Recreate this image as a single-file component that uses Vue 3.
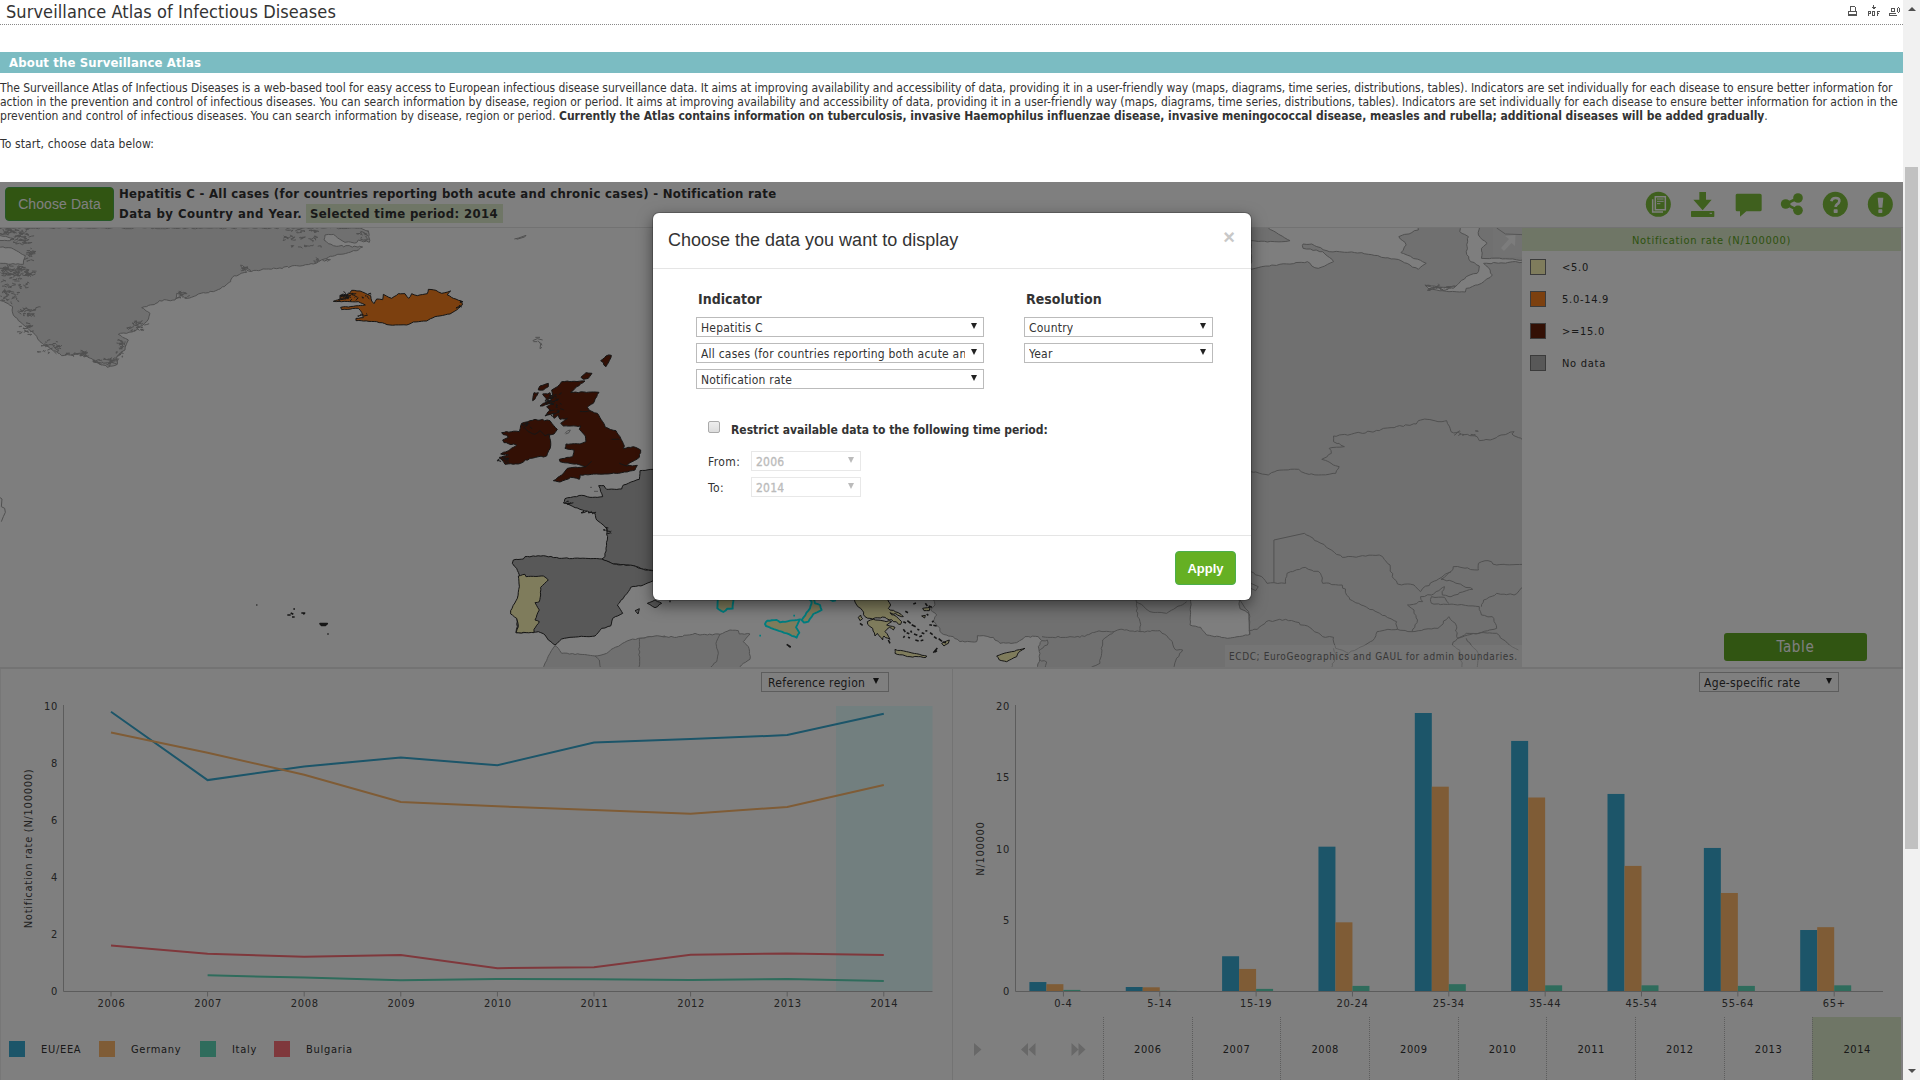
<script setup>
const years = [2006, 2007, 2008, 2009, 2010, 2011, 2012, 2013, 2014]

const trends = [
  { name: 'EU/EEA', color: '#38aad2', start: 0, values: [9.8, 7.4, 7.88, 8.19, 7.92, 8.72, 8.84, 8.98, 9.73] },
  { name: 'Germany', color: '#feb86c', start: 0, values: [9.07, 8.36, 7.59, 6.63, 6.48, 6.35, 6.22, 6.46, 7.23] },
  { name: 'Italy', color: '#5ed8b8', start: 1, values: [0.55, 0.47, 0.38, 0.42, 0.41, 0.39, 0.42, 0.35] },
  { name: 'Bulgaria', color: '#ff7078', start: 0, values: [1.6, 1.31, 1.2, 1.26, 0.8, 0.83, 1.27, 1.32, 1.26] }
]
const yearX = (i) => 111 + i * 96.6
const rateY = (v) => 991 - v * 28.5
const trendPoints = (t) => t.values.map((v, i) => `${yearX(i + t.start)},${rateY(v).toFixed(1)}`).join(' ')

const ages = [
  { label: '0-4', rates: [0.65, 0.5, 0.1] },
  { label: '5-14', rates: [0.3, 0.28, 0.03] },
  { label: '15-19', rates: [2.46, 1.57, 0.17] },
  { label: '20-24', rates: [10.15, 4.84, 0.38] },
  { label: '25-34', rates: [19.53, 14.36, 0.5] },
  { label: '35-44', rates: [17.57, 13.6, 0.42] },
  { label: '45-54', rates: [13.85, 8.8, 0.42] },
  { label: '55-64', rates: [10.06, 6.9, 0.38] },
  { label: '65+', rates: [4.3, 4.5, 0.42] }
]
const ageX = (i) => 1063.4 + i * 96.35

const classes = [
  { label: '<5.0', color: '#fff8b8' },
  { label: '5.0-14.9', color: '#f8801e' },
  { label: '>=15.0', color: '#66200a' },
  { label: 'No data', color: '#b0b0b0' }
]

/* Deterministic noise keeps the coastlines identical on every load. */
let seed = 7
const rand = () => {
  seed = (seed * 16807) % 2147483647
  return seed / 2147483647 - 0.5
}

/* Splits every segment and nudges the new vertices, giving a ragged coast. */
function coast(text, amp = 5, closed = true) {
  const pts = text.trim().split(' ').map((p) => p.split(',').map(Number))
  const out = []
  const n = closed ? pts.length : pts.length - 1
  for (let i = 0; i < n; i++) {
    const [x1, y1] = pts[i]
    const [x2, y2] = pts[(i + 1) % pts.length]
    const steps = Math.max(1, Math.round(Math.hypot(x2 - x1, y2 - y1) / 8))
    out.push([x1, y1])
    for (let s = 1; s < steps; s++) {
      out.push([x1 + ((x2 - x1) * s) / steps + rand() * amp, y1 + ((y2 - y1) * s) / steps + rand() * amp])
    }
  }
  if (!closed) out.push(pts[pts.length - 1])
  return 'M' + out.map((p) => p.map((v) => v.toFixed(1)).join(',')).join('L') + (closed ? 'Z' : '')
}

/* Clusters of short fjord strokes inside x, y, width, height boxes. */
function fjords(boxes, density = 1) {
  let d = ''
  for (const [x, y, w, h, n] of boxes) {
    for (let i = 0; i < n * density; i++) {
      const px = x + (rand() + 0.5) * w
      const py = y + (rand() + 0.5) * h
      d += `M${px.toFixed(1)},${py.toFixed(1)}l${(rand() * 26).toFixed(1)},${(rand() * 9).toFixed(1)}l${(rand() * 16).toFixed(1)},${(rand() * 10).toFixed(1)}`
    }
  }
  return d
}

const greenland = coast('-6,9 1080,9 1105,18 1108,52 1075,45 1070,53 1035,52 1018,42 1000,28 975,30 972,45 985,56 1000,62 1088,66 1075,75 1020,88 985,97 940,117 890,122 830,131 745,138 722,120 740,142 697,157 692,170 660,192 640,200 610,203 560,220 530,205 525,225 478,227 468,235 425,248 450,265 440,290 410,315 380,325 355,328 385,345 375,375 350,395 352,418 322,427 282,408 250,385 185,392 120,350 105,328 60,290 40,270 38,245 -6,222', 5)
const inlets = coast('-6,64 40,72 76,92 70,118 -6,115', 4) + coast('-6,30 38,40 30,47 -6,46', 3)
const iceInlets = fjords([
  [8, 14, 74, 16, 16], [40, 30, 46, 26, 16], [80, 72, 20, 34, 10], [4, 122, 74, 30, 34], [70, 130, 30, 24, 8], [4, 160, 84, 30, 12], [4, 196, 50, 34, 14], [62, 248, 46, 26, 14],
  [64, 290, 40, 40, 8], [116, 342, 60, 40, 12], [236, 380, 36, 14, 10], [280, 402, 64, 16, 16], [352, 345, 22, 60, 12], [390, 290, 44, 26, 12],
  [525, 204, 40, 16, 8], [870, 14, 90, 8, 8], [850, 34, 100, 10, 10], [870, 62, 100, 4, 5], [1080, 14, 22, 34, 8], [722, 124, 20, 12, 4],
  [940, 100, 50, 10, 4], [190, 384, 40, 6, 4]
], 1.9)
const iceland = coast('1000,229 1020,222 1020,212 1045,208 1055,196 1080,198 1112,212 1115,228 1122,236 1130,222 1148,224 1150,208 1175,220 1195,206 1215,206 1226,220 1235,206 1252,212 1282,206 1285,193 1308,196 1325,205 1352,198 1342,210 1360,220 1385,228 1387,240 1370,255 1350,267 1305,275 1280,288 1240,291 1220,300 1170,300 1130,290 1068,287 1068,280 1090,278 1085,262 1075,250 1025,254 1022,247 1060,244 1096,240 1075,230', 2)
const icelandFjords = fjords([[1020, 206, 40, 18, 24], [1062, 205, 46, 14, 6], [1374, 232, 10, 18, 6], [1085, 262, 18, 12, 4]])

const britain = coast('245,125 315,123 285,145 272,157 357,157 340,190 322,202 330,212 352,220 368,245 376,262 408,272 420,290 433,318 430,326 460,320 482,330 478,352 450,368 440,378 472,376 465,390 425,398 375,402 350,402 300,405 298,418 272,412 240,426 220,422 245,405 262,385 318,380 290,372 240,365 238,358 278,350 282,330 255,325 258,312 300,312 318,305 316,288 298,268 302,258 250,258 242,250 262,235 240,238 235,225 222,235 220,220 195,228 210,210 200,200 218,190 180,198 190,190 212,182 218,165 215,150 232,140', 3)
const isles = ['362,62 378,48 394,46 388,62 378,80 370,68', '303,112 318,98 336,100 325,115 310,118', '175,150 180,138 205,130 205,140 190,150', '158,182 162,158 175,158 168,170', '188,162 210,158 214,175 200,180'].map((s) => coast(s, 5)).join('')
const ireland = coast('65,278 95,275 118,275 125,250 150,242 165,238 210,242 232,268 222,282 208,285 212,318 200,348 150,355 115,372 75,373 58,352 85,345 62,342 100,322 110,315 72,308 68,300 85,292', 4)
const britishInner = coast('133,262 145,275 165,283 180,272 195,288 208,282', 2, false) + coast('300,214 315,215 330,212', 2, false) + coast('318,380 335,364', 1, false) + coast('395,298 418,298', 2, false) + coast('418,370 440,378', 1, false) + fjords([[200, 165, 24, 60, 22], [62, 345, 22, 20, 10], [125, 250, 26, 14, 8], [225, 150, 20, 80, 10]])
const france = coast('560,386 520,388 480,392 478,418 430,435 425,447 380,448 372,437 356,437 368,470 330,472 305,466 255,476 253,484 262,492 300,508 345,520 350,540 380,565 382,600 375,650 366,657 400,672 460,677 490,688 520,692 560,694', 3)
const spain = coast('366,657 300,655 245,655 190,647 135,650 130,657 100,660 97,670 110,685 118,705 120,740 112,780 92,815 110,830 112,860 108,878 175,875 195,885 205,900 225,915 245,897 270,892 345,888 365,865 392,858 398,835 428,820 412,795 445,755 452,742 490,735 520,722 560,700 560,694 520,692 490,688 460,677 400,672', 3) + coast('502,790 525,780 545,790 525,803', 3) + coast('465,812 478,806 474,822', 2)
const franceShore = fjords([[256, 484, 14, 10, 6], [305, 512, 44, 10, 5], [374, 560, 10, 30, 6]])
const portugal = coast('115,708 135,703 138,710 190,708 205,720 182,742 182,765 178,785 165,788 178,810 165,840 178,845 162,868 162,878 108,878 115,860 110,835 92,822 92,812 112,775 118,740', 2)
const maghreb = coast('225,917 235,925 245,940 300,943 345,948 380,940 400,925 450,900 500,892 555,888 560,1000 180,1000 210,940', 3)
const maghrebBorder = coast('345,948 358,960 362,985', 2, false)

const tunisia = coast('-2,145 45,138 110,142 165,130 180,135 240,133 270,120 295,122 298,132 330,132 310,155 325,170 328,190 330,208 310,220 290,240 -2,240', 4)
const tunisiaBorder = coast('240,133 228,160 235,190 230,215 205,236', 3, false)
const sardinia = coast('235,10 232,55 250,66 262,56 278,56 282,10', 2)
const calabria = coast('490,10 515,35 510,55 485,90 492,98 505,95 520,72 545,60 540,45 525,40 520,10', 2)
const sicily = coast('375,102 382,92 410,90 420,97 480,88 468,112 478,128 470,143 425,125 378,108', 2)
const greece = coast('632,10 650,45 662,55 675,80 690,85 735,82 760,95 782,103 785,95 750,68 790,80 775,68 745,55 752,45 738,10', 5) + coast('682,95 700,88 755,95 740,105 765,112 760,120 748,112 735,125 750,148 732,138 728,150 712,130 705,138 698,115 683,103', 4) + coast('765,178 800,185 860,198 858,202 810,200 765,190', 3) + coast('905,160 928,150 925,160 912,168', 3) + coast('848,55 870,52 868,62 852,62', 3) + coast('845,78 856,76 854,84', 2) + coast('655,82 662,75 668,86 660,92', 4)
const cyprus = coast('1070,198 1100,188 1115,185 1155,175 1135,188 1130,200 1100,215 1078,210', 2)
const aegean = 'M790,95l8,4M802,92l10,8M815,104l12,6M832,118l6,2M790,118l6,8M800,128l8,3M812,122l3,6M822,132l10,4M845,128l8,3M838,140l8,-3M804,142l6,2M826,150l10,3M842,152l8,-2M868,104l8,2M880,106l10,2M870,128l8,6M882,140l8,6M896,146l10,8M908,156l10,2M856,122l6,1M794,138l-4,5M820,42l8,-3M796,64l8,4M860,72l5,4M880,188l12,-14M885,186l6,-4M440,163l12,8M446,168l6,4M88,34l4,0M856,40l6,8M866,48l10,4M876,96l5,-3M660,100l8,6M745,150l5,10'
const anatolia = coast('880,10 885,45 872,60 890,75 880,95 895,110 905,130 940,140 960,155 1010,155 1012,137 1060,142 1080,160 1130,158 1155,140 1195,140 1205,152 1195,170 1200,190 1198,215 1188,250 1850,250 1850,10', 5)
const levant = ['1206,140 1222,142 1290,140 1320,142 1370,125 1422,125 1440,118 1500,125 1560,122', '1422,125 1388,150 1385,190 1380,220 1352,234', '1206,152 1222,150 1222,165 1198,182', '1198,208 1220,216 1215,234', '1488,30 1492,80 1500,95 1500,125', '1560,122 1592,150 1605,178 1628,180 1608,210 1600,236', '1490,35 1530,65 1580,70 1640,35'].map((s) => coast(s, 5, false)).join('')
const caspian = coast('1653,-10 1650,75 1682,82 1700,105 1762,115 1830,103 1828,42 1800,26 1795,-10', 3)

const arctic = coast('25,62 80,65 115,62 65,24 65,10 412,10 410,30 365,50 382,75 370,98 428,130 410,148 370,122 280,98 205,95 165,72 145,72 145,85 190,95 215,125 180,145 165,138 155,125 50,140 25,148', 4)
const obGulf = coast('505,10 505,35 525,50 520,95 530,125 550,138 545,160 520,170 490,205 425,195 435,208 505,216 518,216 520,205 555,190 580,165 575,150 560,130 650,126 650,120 620,117 555,115 555,85 568,70 548,45 550,10', 4)
const asia = ['25,755 45,760 65,765 80,755 100,750 135,748 150,760 180,765 220,760 228,740 188,718 210,700 205,685 240,680 215,665 215,648 320,632 330,625 405,612 410,602 430,598 455,605 475,602 485,635 545,650 550,662 575,660 600,645 630,635 625,642 652,662',
  '148,940 235,1012 320,1005 345,1035 350,1070 362,1092 400,1095 415,1115 420,1105 485,1055 490,1040 548,1050 548,1030 570,1022 590,1035 652,1033',
  '25,1055 50,1070 62,1090 105,1090 108,1060 150,1042 185,1060 190,1090 235,1095 252,1138 360,1205 362,1228 340,1228 315,1235 305,1262 250,1300 220,1285 215,1252 190,1250 155,1218 105,1198 60,1205 40,1228 20,1232',
  '362,1228 395,1235 408,1200 400,1170 385,1155 420,1145 415,1130 440,1125 470,1100 465,1125 485,1130 535,1108 490,1085 462,1078 485,1055',
  '395,1235 455,1225 480,1190 495,1210 500,1255 590,1225 580,1190 555,1185 550,1160 500,1155 440,1150 440,1130 470,1132 480,1150',
  '555,1160 560,1140 590,1120 630,1125 652,1100', '500,1255 488,1275 505,1290 510,1345', '500,1255 520,1240 590,1240 615,1270 640,1290', '520,1255 550,1305 545,1345', '215,1285 220,1300 210,1345'
].map((s) => coast(s, 5, false)).join('') + 'M78,1088V960L148,940'
const asiaInner = fjords([[432, 198, 60, 10, 18], [490, 634, 60, 14, 6]])
</script>

<template>
  <div class="page">
    <div class="content">
      <header class="title-row">
        <h1>Surveillance Atlas of Infectious Diseases</h1>
        <svg class="tools" width="54" height="14" viewBox="0 0 54 14" shape-rendering="crispEdges" fill="none" stroke="#555" stroke-width="1">
          <path d="M2.500 6V1.500H6.500L7.500 2.500V6M.5 6.500H9M.5 9.500H9M.5 6V10M8.500 6V10" />
          <path d="M0 9.500H9" stroke-width="2" />
          <path d="M25.500 0V4M23.500 2.500H28M24.500 3.500H27M20.500 11V6.500H22.500V8.500H20.500M24.500 6V10.500H26.500V6.500H24.500M29.500 11V6.500H32M29.500 8.500H31" />
          <path d="M43.500 3.500H46.500V6.500H43.500ZM42 8.500H48M41 10.500H49M41.500 8V10M49.500 3V7M50.500 2L51.500 4V6L50.500 8" />
        </svg>
      </header>
      <h2>About the Surveillance Atlas</h2>
      <p class="intro">
        <span class="l1">The Surveillance Atlas of Infectious Diseases is a web-based tool for easy access to European infectious disease surveillance data. It aims at improving availability and accessibility of data, providing it in a user-friendly way (maps, diagrams, time series, distributions, tables). Indicators are set individually for each disease to ensure better information for</span><br>
        <span class="l2">action in the prevention and control of infectious diseases. You can search information by disease, region or period. It aims at improving availability and accessibility of data, providing it in a user-friendly way (maps, diagrams, time series, distributions, tables). Indicators are set individually for each disease to ensure better information for action in the</span><br>
        <span class="l3">prevention and control of infectious diseases. You can search information by disease, region or period. </span><b>Currently the Atlas contains information on tuberculosis, invasive Haemophilus influenzae disease, invasive meningococcal disease, measles and rubella; additional diseases will be added gradually</b>.<br><br>
        <span class="start">To start, choose data below:</span>
      </p>

      <div class="atlas">
        <div class="bar">
          <button class="choose">Choose Data</button>
          <div class="headline">
            <div class="h-a">Hepatitis C - All cases (for countries reporting both acute and chronic cases) - Notification rate</div>
            <div class="h-b"><span class="by">Data by Country and Year.</span><span class="period">Selected time period: 2014</span></div>
          </div>
          <svg class="actions" width="283" height="45" viewBox="0 6 849 135" fill="#7ec03c">
            <circle cx="115" cy="73" r="37.500" />
            <g fill="none" stroke="#fff" stroke-width="4.500"><path d="M106 50H136V89H106ZM98 58V96H129" /><path d="M111 57H131M111 64H131M111 71H121" stroke-width="3" /></g>
            <path d="M238 36H258V59H275L248 91L220 59H238Z" /><rect x="213" y="93" width="70" height="18" rx="2" /><path d="M269 100H276" stroke="#fff" stroke-width="3" />
            <path d="M351 41H420Q425 41 425 46V89Q425 94 420 94H379L360 110V94H351Q347 94 347 89V46Q347 41 351 41Z" />
            <circle cx="497" cy="72" r="14.500" /><circle cx="534" cy="54" r="14.500" /><circle cx="534" cy="91" r="14.500" /><path d="M534 54L497 72L534 91" fill="none" stroke="#7ec03c" stroke-width="8" />
            <circle cx="646" cy="73" r="37.500" />
            <path d="M634 64Q636 54 647 54Q659 54 658 64Q657 70 651 73Q647 76 647 81" fill="none" stroke="#fff" stroke-width="8" /><rect x="641" y="88" width="12" height="11" rx="2" fill="#fff" />
            <circle cx="781" cy="73" r="37.500" />
            <path d="M773 53H790L787 83H776Z" fill="#fff" /><rect x="775" y="88" width="12" height="11" rx="2" fill="#fff" />
          </svg>
        </div>

        <div class="upper">
          <div class="map">
            <svg width="1522" height="439" viewBox="0 228 1522 439" stroke-linejoin="round">
              <g class="land" transform="translate(0 225) scale(.33333)">
                <path :d="greenland" /><path class="sea" :d="inlets" /><path class="ink" :d="iceInlets" />
                <path class="ink" d="M1543,42L1556,39L1578,31L1574,36L1550,43" />
                <path class="ink" d="M-4,815L6,822L4,845L14,850L16,862L10,875L4,890" />
              </g>
              <g class="member" transform="translate(0 225) scale(.33333)">
                <path fill="#f8801e" :d="iceland" /><path class="line" :d="icelandFjords" />
                <path class="line heavy" d="M769,1140h3M862,1170h10M876,1176h8M872,1164l8,4M880,1152h5M904,1164h10l-4,4M960,1196h22l-6,5h-12zM982,1227h4" />
              </g>
              <g class="land" transform="translate(480 340) scale(.33333)">
                <path :d="maghreb" /><path class="ink" :d="maghrebBorder" />
                <path class="ink" d="M158,2l14,-6l16,4M160,5h12M166,-8l14,0M174,2l8,10l-2,14l6,-4M182,8l4,8M255,280l8,-8l8,-2l-4,8l-10,4M330,442h6M342,454h12" />
              </g>
              <g class="member" transform="translate(480 340) scale(.33333)">
                <path fill="#b0b0b0" :d="france" /><path fill="#b0b0b0" :d="spain" /><path fill="#fff8b8" :d="portugal" /><path class="line" :d="franceShore" />
                <path fill="#66200a" :d="britain" /><path fill="#66200a" :d="isles" /><path fill="#66200a" :d="ireland" /><path class="line" :d="britishInner" />
              </g>
              <g class="land" transform="translate(640 590) scale(.33333)">
                <path :d="tunisia" /><path class="ink" :d="tunisiaBorder" />
                <path :d="anatolia" /><path class="ink" :d="levant" />
              </g>
              <rect x="1251" y="222" width="280" height="460" fill="#e1e1e1" />
              <path class="sea" transform="translate(640 600) scale(.33333)" :d="caspian" />
              <g class="member" transform="translate(640 590) scale(.33333)">
                <path fill="#fff8b8" :d="greece" /><path fill="#fff8b8" :d="cyprus" /><path class="line heavy" :d="aegean" />
              </g>
              <g class="picked" transform="translate(640 590) scale(.33333)">
                <path :d="sardinia" /><path :d="calabria" /><path :d="sicily" /><path d="M460,77h5M358,137h5M570,28l8,5l10,-2" />
              </g>
              <g class="land" transform="translate(1240 220) scale(.43506 .33333)">
                <path class="sea" :d="arctic" /><path class="sea" :d="obGulf" />
                <path class="ink" :d="asia" /><path class="ink" :d="asiaInner" />
                <path class="ink" d="M0,1140L12,1165L20,1175L22,1245M25,1090L42,1100L36,1112L25,1105M590,24L610,42L652,44" />
              </g>
              <rect x="1493" y="228" width="29" height="29" fill="#fff" opacity=".12" />
              <path d="M1501 248L1509 239L1505 236L1515.500 235L1515 246L1511.500 243L1504 251Z" fill="#fff" opacity=".75" />
            </svg>
            <div class="credit">ECDC; EuroGeographics and GAUL for admin boundaries.</div>
          </div>
          <div class="legend">
            <div class="legend-title">Notification rate (N/100000)</div>
            <div v-for="c in classes" :key="c.label" class="class-row"><i :style="{ background: c.color }"></i>{{ c.label }}</div>
            <button class="table-btn">Table</button>
          </div>
        </div>

        <div class="lower">
          <section class="panel trend">
            <div class="select region"><span>Reference region</span><i></i></div>
            <svg width="952" height="330" viewBox="0 692 952 330">
              <rect x="836" y="706" width="96.500" height="285" fill="#e4ffff" />
              <polyline v-for="t in trends" :key="t.name" :points="trendPoints(t)" fill="none" :stroke="t.color" stroke-width="2" />
              <path class="axis" d="M63.500 705V991.500H932.500" />
              <path v-for="(y, i) in years" :key="y" class="axis" :d="`M${yearX(i)} 991.500v5`" />
              <text v-for="v in [0, 2, 4, 6, 8, 10]" :key="v" x="58" :y="rateY(v) + 4" text-anchor="end">{{ v }}</text>
              <text v-for="(y, i) in years" :key="'t' + y" :x="yearX(i) + .5" y="1007" text-anchor="middle">{{ y }}</text>
              <text class="side" transform="translate(32 848.500) rotate(-90)" text-anchor="middle">Notification rate (N/100000)</text>
            </svg>
            <div class="keys"><span v-for="t in trends" :key="t.name" :class="'k-' + t.name.slice(0, 2)"><i :style="{ background: t.color }"></i>{{ t.name }}</span></div>
          </section>
          <section class="panel ages">
            <div class="select rate"><span>Age-specific rate</span><i></i></div>
            <svg width="950" height="325" viewBox="953 692 950 325">
              <g v-for="(a, i) in ages" :key="a.label">
                <rect v-for="(r, j) in a.rates" :key="j" :x="ageX(i) - 34 + j * 17" :y="991.300 - r * 14.250" width="17" :height="r * 14.250" :fill="trends[j].color" />
                <path class="axis" :d="`M${ageX(i)} 991.500v5`" />
                <text :x="ageX(i)" y="1007" text-anchor="middle">{{ a.label }}</text>
              </g>
              <path class="axis" d="M1015.500 705V991.500H1883" />
              <text v-for="v in [0, 5, 10, 15, 20]" :key="v" x="1010" :y="995 - v * 14.250" text-anchor="end">{{ v }}</text>
              <text class="side" transform="translate(984 848.500) rotate(-90)" text-anchor="middle">N/100000</text>
            </svg>
            <div class="timeline">
              <div class="controls">
                <svg width="150" height="63" viewBox="953 1017 150 63" fill="#d0d0d0"><path d="M974 1043L981.500 1049.500L974 1056ZM1028 1043V1056L1021 1049.500ZM1035.500 1043V1056L1028.500 1049.500ZM1071.500 1043L1078.500 1049.500L1071.500 1056ZM1078.500 1043L1085.500 1049.500L1078.500 1056Z" /></svg>
              </div>
              <div v-for="y in years" :key="y" class="year" :class="{ on: y === 2014 }">{{ y }}</div>
            </div>
          </section>
        </div>

        <div class="backdrop">
          <div class="modal">
            <div class="m-head"><span>Choose the data you want to display</span><b>×</b></div>
            <div class="m-body">
              <div class="cols">
                <div class="col wide">
                  <h3>Indicator</h3>
                  <div class="select"><span>Hepatitis C</span><i></i></div>
                  <div class="select"><span>All cases (for countries reporting both acute an</span><i></i></div>
                  <div class="select"><span>Notification rate</span><i></i></div>
                </div>
                <div class="col">
                  <h3>Resolution</h3>
                  <div class="select"><span>Country</span><i></i></div>
                  <div class="select"><span>Year</span><i></i></div>
                </div>
              </div>
              <div class="restrict"><i></i><b>Restrict available data to the following time period:</b></div>
              <div class="span-row"><label>From:</label><div class="select off"><span>2006</span><i></i></div></div>
              <div class="span-row"><label>To:</label><div class="select off"><span>2014</span><i></i></div></div>
            </div>
            <div class="m-foot"><button>Apply</button></div>
          </div>
        </div>
      </div>
    </div>
    <div class="scroll"><i class="up"></i><div class="thumb"></div><i class="down"></i></div>
  </div>
</template>

<style>
body { margin: 0; overflow: hidden; }
</style>

<style scoped>
* { box-sizing: border-box; }
.page { display: flex; width: 1920px; height: 1080px; overflow: hidden; background: #fff; color: #333; font-family: "DejaVu Sans Condensed", "DejaVu Sans", sans-serif; font-size: 12px; white-space: nowrap; }
.content { width: 1903px; height: 1080px; flex: none; }
.title-row { display: flex; justify-content: space-between; height: 25px; padding: 0 1px 0 6px; border-bottom: 1px dotted #888; }
h1 { margin: 0; font-size: 18px; font-weight: 400; line-height: 23px; letter-spacing: .08px; }
.tools { margin-top: 5px; }
h2 { height: 21px; margin: 27px 0 0; padding-left: 9px; background: #7bbcc2; color: #fff; font-size: 13px; line-height: 21px; letter-spacing: .14px; }
.intro { height: 109px; margin: 0; padding-top: 8px; line-height: 14px; letter-spacing: -.06px; }
.l2 { letter-spacing: -.019px; }
.l3 { letter-spacing: .02px; }
.intro b { letter-spacing: -.009px; }
.start { letter-spacing: .11px; }

.atlas { position: relative; height: 898px; background: #fff; }
.bar { display: flex; align-items: flex-start; height: 46px; border-bottom: 1px solid #e4e4e4; }
button { border: 1px solid #4cae4c; border-radius: 4px; background: #62aa24; color: #fff; }
.choose { width: 109px; height: 34px; margin: 5px 5px 0; padding: 0; font: 14px "Liberation Sans", sans-serif; letter-spacing: .09px; }
.headline { flex: 1; font-size: 13px; font-weight: 700; line-height: 20px; padding-top: 2px; }
.h-a { letter-spacing: .3px; }
.h-b { display: flex; letter-spacing: .35px; }
.by { width: 187px; letter-spacing: .46px; }
.period { height: 19px; padding: 0 5px 0 4px; background: #deeccc; line-height: 19px; }
.actions { flex: none; }

.upper { display: flex; height: 439px; }
.map { position: relative; width: 1522px; height: 439px; background: #fdfdfd; overflow: hidden; }
.map svg { display: block; }
.map path { vector-effect: non-scaling-stroke; }
.land path { fill: #e1e1e1; stroke: #a0a0a0; stroke-width: 1; }
.map path.sea { fill: #fdfdfd; stroke: #a0a0a0; stroke-width: 1; }
.map path.ink { fill: none; stroke: #a0a0a0; stroke-width: 1; }
.member path { stroke: #2c2c2c; stroke-width: 1; }
.map path.line { fill: none; stroke: #2c2c2c; }
.map path.heavy { stroke-width: 1.600; }
.picked path { fill: #fff8b8; stroke: #00fbff; stroke-width: 1.900; }
.credit { position: absolute; right: 0; bottom: 0; width: 297px; height: 22px; padding-left: 4px; background: rgba(255, 255, 255, .35); color: #707070; font-size: 10px; line-height: 24px; letter-spacing: .6px; }
.legend { display: flex; flex-direction: column; width: 381px; border-right: 2px solid #f0f0f0; font-size: 11px; }
.legend-title { height: 23px; margin-bottom: 8px; background: #deeccc; color: #5da522; line-height: 25px; text-align: center; letter-spacing: .7px; }
.class-row { display: flex; align-items: center; height: 16px; margin: 0 0 16px 8px; letter-spacing: .72px; }
.class-row i { width: 16px; height: 16px; margin-right: 16px; border: 1px solid #777; }
.table-btn { align-self: flex-end; width: 143px; height: 28px; margin: auto 34px 6px 0; border: 0; border-radius: 3px; padding: 0; font: 15px "DejaVu Sans Condensed", "DejaVu Sans", sans-serif; letter-spacing: .67px; }

.lower { display: flex; height: 413px; border-top: 2px solid #e6e6e6; }
.panel { display: flex; flex-direction: column; padding-top: 3px; }
.trend { width: 953px; border-right: 1px solid #e6e6e6; border-left: 1px solid #eee; }
.trend > svg { margin-left: -1px; }
.ages { width: 950px; }
.panel > svg { flex: none; display: block; }
.axis { fill: none; stroke: #b8b8b8; stroke-width: 1; }
text { fill: #444; font-size: 11px; letter-spacing: .65px; }
.side { letter-spacing: .72px; }
.keys { display: flex; padding: 19px 0 0 8px; font-size: 11px; letter-spacing: .7px; }
.keys span { display: flex; align-items: center; height: 16px; }
.keys i { width: 16px; height: 16px; margin-right: 16px; }
.k-EU { width: 90px; }
.k-Ge { width: 101px; }
.k-It { width: 74px; }
.timeline { display: flex; height: 63px; margin-right: 2px; }
.controls { width: 150px; height: 63px; }
.year { flex: 1; border-left: 1px dotted #bbb; font-size: 11px; letter-spacing: .6px; line-height: 65px; text-align: center; }
.year.on { background: #deeccc; }

.select { display: flex; align-items: center; justify-content: space-between; height: 20px; padding: 0 6px 0 4px; border: 1px solid #bbb; background: #fff; font-size: 12px; line-height: 20px; letter-spacing: .22px; }
.select span { overflow: hidden; height: 18px; }
.select i { flex: none; margin: -2px 0 0 6px; border: 3px solid transparent; border-top: 6px solid #222; border-bottom: 0; }
.select.region { width: 128px; margin-left: 760px; padding: 0 9px 0 6px; letter-spacing: .34px; line-height: 21px; }
.select.rate { width: 140px; margin-left: 746px; padding-right: 6px; letter-spacing: .32px; }

.backdrop { position: absolute; inset: 0; background: rgba(0, 0, 0, .5); }
.modal { width: 598px; height: 387px; margin: 31px 0 0 653px; border-radius: 6px; background: #fff; box-shadow: 0 5px 15px rgba(0, 0, 0, .5), 0 0 0 1px rgba(0, 0, 0, .2); }
.m-head { display: flex; justify-content: space-between; height: 56px; padding: 0 16px 0 15px; border-bottom: 1px solid #e5e5e5; font: 18px/54px "Liberation Sans", sans-serif; }
.m-head b { color: #c8c8c8; font-size: 20px; line-height: 48px; }
.m-body { height: 266px; padding: 20px 0 0 43px; }
.cols { display: flex; gap: 40px; height: 124px; }
.col { width: 189px; }
.col.wide { width: 288px; }
h3 { height: 28px; margin: 0; padding-left: 2px; font-size: 14px; line-height: 20px; }
.col .select { margin-bottom: 6px; }
.restrict { display: flex; align-items: center; height: 30px; padding-left: 12px; }
.restrict i { width: 12px; height: 12px; margin: -3px 11px 0 0; border: 1px solid #aaa; border-radius: 2px; background: linear-gradient(#eee, #ddd); }
.restrict b { line-height: 18px; padding-top: 3px; letter-spacing: .01px; }
.span-row { display: flex; align-items: center; height: 20px; margin: 0 0 6px 12px; letter-spacing: .4px; }
.restrict + .span-row { margin-top: 8px; }
.span-row label { width: 43px; padding-top: 2px; }
.span-row .select { width: 110px; border-color: #e8e8e8; color: #bbb; letter-spacing: .2px; -webkit-text-stroke: .3px #bbb; }
.off i { border-top-color: #bbb; }
.m-foot { display: flex; justify-content: flex-end; padding: 15px 15px 0 0; border-top: 1px solid #e5e5e5; }
.m-foot button { width: 61px; height: 34px; padding: 0; background: #65b023; font: bold 13px "Liberation Sans", sans-serif; }

.scroll { display: flex; flex-direction: column; align-items: center; width: 17px; height: 1080px; background: #f1f1f1; }
.scroll .up { margin-top: 7px; border: 4px solid transparent; border-top: 0; border-bottom-color: #505050; }
.thumb { width: 13px; height: 682px; margin-top: 156px; background: #c1c1c1; }
.scroll .down { margin: auto 0 7px; border: 4px solid transparent; border-bottom: 0; border-top-color: #505050; }
</style>
